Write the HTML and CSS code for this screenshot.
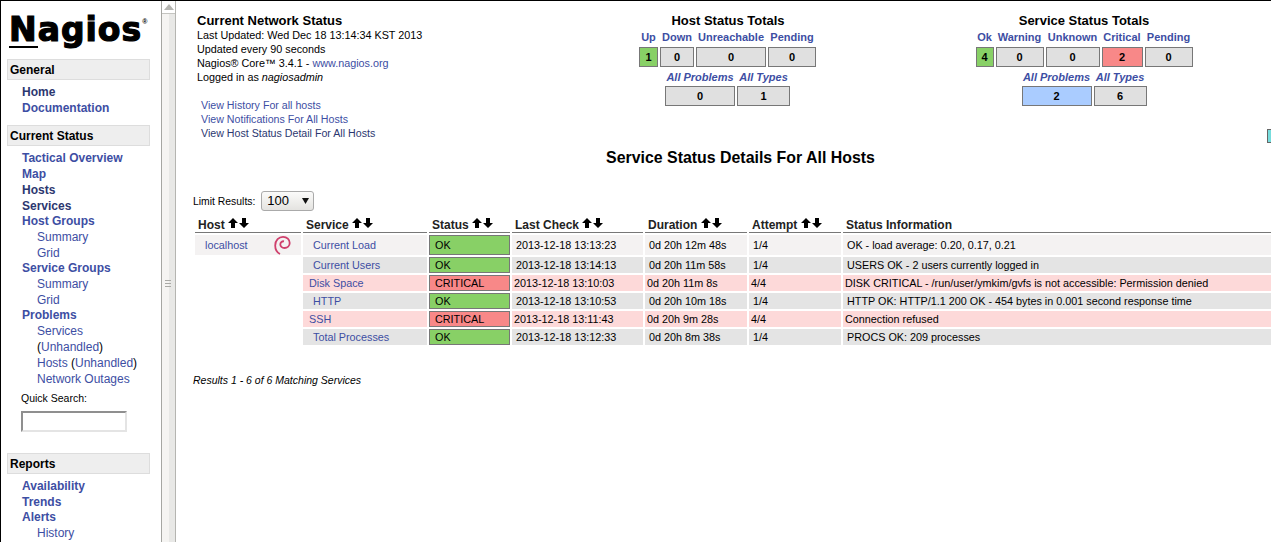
FILE: index.html
```html
<!DOCTYPE html>
<html lang="en">
<head>
  <meta charset="UTF-8" />
  <title>Nagios Core</title>
  <link rel="stylesheet" href="styles.css">
</head>
<body>

  <div class="frames">
    <nav class="side">
      <div class="logo"><span class="logo-n">N</span>agios<sup>®</sup></div>

      <div class="side-head">General</div>
      <div class="side-group">
        <a class="nav1 seen" href="#">Home</a>
        <a class="nav1" href="#">Documentation</a>
      </div>

      <div class="side-head">Current Status</div>
      <div class="side-group no-gap">
        <a class="nav1" href="#">Tactical Overview</a>
        <a class="nav1" href="#">Map</a>
        <a class="nav1 seen" href="#">Hosts</a>
        <a class="nav1 seen" href="#">Services</a>
        <a class="nav1 tight" href="#">Host Groups</a>
        <a class="nav2" href="#">Summary</a>
        <a class="nav2" href="#">Grid</a>
        <a class="nav1 tight" href="#">Service Groups</a>
        <a class="nav2" href="#">Summary</a>
        <a class="nav2" href="#">Grid</a>
        <a class="nav1 tight" href="#">Problems</a>
        <a class="nav2" href="#">Services</a>
        <div class="nav2">(<a href="#">Unhandled</a>)</div>
        <div class="nav2"><a href="#">Hosts</a> (<a href="#">Unhandled</a>)</div>
        <a class="nav2" href="#">Network Outages</a>
      </div>

      <div class="quick">
        <label for="q">Quick Search:</label>
        <input type="text" id="q" />
      </div>

      <div class="side-head">Reports</div>
      <div class="side-group">
        <a class="nav1" href="#">Availability</a>
        <a class="nav1" href="#">Trends</a>
        <a class="nav1 tight" href="#">Alerts</a>
        <a class="nav2" href="#">History</a>
      </div>
    </nav>

    <div class="splitter">
      <div class="split-up"><svg width="10" height="6" viewBox="0 0 10 6"><path d="M5 0 10 6H0z" fill="#b5b5b1"/></svg></div>
      <div class="split-grip"><i></i><i></i><i></i></div>
    </div>

    <main class="main">
      <div class="top">
        <div class="info">
          <div class="info-title">Current Network Status</div>
          <div>Last Updated: Wed Dec 18 13:14:34 KST 2013</div>
          <div>Updated every 90 seconds</div>
          <div>Nagios® Core™ 3.4.1 - <a href="#">www.nagios.org</a></div>
          <div>Logged in as <em>nagiosadmin</em></div>
          <div class="info-links">
            <a href="#">View History For all hosts</a>
            <a href="#">View Notifications For All Hosts</a>
            <a class="seen" href="#">View Host Status Detail For All Hosts</a>
          </div>
        </div>

        <div class="totals totals-host">
          <div class="totals-title">Host Status Totals</div>
          <table class="tot">
            <tr><th>Up</th><th>Down</th><th>Unreachable</th><th>Pending</th></tr>
            <tr><td class="green w-up">1</td><td class="w-down">0</td><td class="w-unreach">0</td><td class="w-pend">0</td></tr>
          </table>
          <table class="tot sub">
            <tr><th>All Problems</th><th>All Types</th></tr>
            <tr><td class="w-prob">0</td><td class="w-types">1</td></tr>
          </table>
        </div>

        <div class="totals totals-serv">
          <div class="totals-title">Service Status Totals</div>
          <table class="tot">
            <tr><th>Ok</th><th>Warning</th><th>Unknown</th><th>Critical</th><th>Pending</th></tr>
            <tr><td class="green w-ok">4</td><td class="w-warn">0</td><td class="w-unk">0</td><td class="red w-crit">2</td><td class="w-pend">0</td></tr>
          </table>
          <table class="tot sub">
            <tr><th>All Problems</th><th>All Types</th></tr>
            <tr><td class="blue w-prob">2</td><td class="w-types">6</td></tr>
          </table>
        </div>
      </div>

      <div class="cyan-box"></div>

      <h1 class="page-title">Service Status Details For All Hosts</h1>

      <div class="limit">
        <span>Limit Results:</span>
        <div class="fake-select">100 <svg width="7" height="6" viewBox="0 0 7 6"><path d="M0 0H7L3.500 6z" fill="#111"/></svg></div>
      </div>

      <table class="status">
        <colgroup>
          <col class="c-host"><col class="c-serv"><col class="c-stat"><col class="c-check"><col class="c-dur"><col class="c-att"><col class="c-info">
        </colgroup>
        <thead>
          <tr>
            <th>Host <svg class="sort" width="21" height="11" viewBox="0 0 21 11"><path d="M5 0 10 5H7V10H3V5H0z"/><path d="M14 0H18V5H21L16 10 11 5H14z"/></svg></th>
            <th>Service <svg class="sort" width="21" height="11" viewBox="0 0 21 11"><path d="M5 0 10 5H7V10H3V5H0z"/><path d="M14 0H18V5H21L16 10 11 5H14z"/></svg></th>
            <th>Status <svg class="sort" width="21" height="11" viewBox="0 0 21 11"><path d="M5 0 10 5H7V10H3V5H0z"/><path d="M14 0H18V5H21L16 10 11 5H14z"/></svg></th>
            <th>Last Check <svg class="sort" width="21" height="11" viewBox="0 0 21 11"><path d="M5 0 10 5H7V10H3V5H0z"/><path d="M14 0H18V5H21L16 10 11 5H14z"/></svg></th>
            <th>Duration <svg class="sort" width="21" height="11" viewBox="0 0 21 11"><path d="M5 0 10 5H7V10H3V5H0z"/><path d="M14 0H18V5H21L16 10 11 5H14z"/></svg></th>
            <th>Attempt <svg class="sort" width="21" height="11" viewBox="0 0 21 11"><path d="M5 0 10 5H7V10H3V5H0z"/><path d="M14 0H18V5H21L16 10 11 5H14z"/></svg></th>
            <th>Status Information</th>
          </tr>
        </thead>
        <tbody>
          <tr class="odd first">
            <td class="host">
              <div class="host-in"><a href="#">localhost</a>
                <svg width="17" height="20" viewBox="0 0 17 20"><path d="M6 19C3 17.500 1.200 14 1.200 10.500 1.200 5 5 1.800 9 1.800 13 1.800 15.700 4.500 15.700 8 15.700 11 13.300 13 10.500 13 8 13 6.200 11.300 6.300 9.200 6.400 7.300 8 6 10 6.300" fill="none" stroke="#cf3f6c" stroke-width="1.800"/></svg>
              </div>
            </td>
            <td class="serv"><a href="#">Current Load</a></td>
            <td class="ok">OK</td>
            <td>2013-12-18 13:13:23</td>
            <td>0d 20h 12m 48s</td>
            <td>1/4</td>
            <td>OK - load average: 0.20, 0.17, 0.21</td>
          </tr>
          <tr class="even">
            <td class="empty"></td>
            <td class="serv"><a href="#">Current Users</a></td>
            <td class="ok">OK</td>
            <td>2013-12-18 13:14:13</td>
            <td>0d 20h 11m 58s</td>
            <td>1/4</td>
            <td>USERS OK - 2 users currently logged in</td>
          </tr>
          <tr class="crit">
            <td class="empty"></td>
            <td class="serv"><a href="#">Disk Space</a></td>
            <td class="bad">CRITICAL</td>
            <td>2013-12-18 13:10:03</td>
            <td>0d 20h 11m 8s</td>
            <td>4/4</td>
            <td>DISK CRITICAL - /run/user/ymkim/gvfs is not accessible: Permission denied</td>
          </tr>
          <tr class="even">
            <td class="empty"></td>
            <td class="serv"><a href="#">HTTP</a></td>
            <td class="ok">OK</td>
            <td>2013-12-18 13:10:53</td>
            <td>0d 20h 10m 18s</td>
            <td>1/4</td>
            <td>HTTP OK: HTTP/1.1 200 OK - 454 bytes in 0.001 second response time</td>
          </tr>
          <tr class="crit">
            <td class="empty"></td>
            <td class="serv"><a href="#">SSH</a></td>
            <td class="bad">CRITICAL</td>
            <td>2013-12-18 13:11:43</td>
            <td>0d 20h 9m 28s</td>
            <td>4/4</td>
            <td>Connection refused</td>
          </tr>
          <tr class="even">
            <td class="empty"></td>
            <td class="serv"><a href="#">Total Processes</a></td>
            <td class="ok">OK</td>
            <td>2013-12-18 13:12:33</td>
            <td>0d 20h 8m 38s</td>
            <td>1/4</td>
            <td>PROCS OK: 209 processes</td>
          </tr>
        </tbody>
      </table>

      <div class="results">Results 1 - 6 of 6 Matching Services</div>
    </main>
  </div>

</body>
</html>
```
FILE: styles.css
```css
html, body {
  margin: 0;
  height: 100%;
  overflow: hidden;
}
body {
  font-family: "Liberation Sans", Arial, sans-serif;
  font-size: 10.800px;
  color: #000;
  background: #fff;
}
a {
  color: #3d4ea3;
  text-decoration: none;
}
a.seen {
  color: #2c3770;
}
.frames {
  display: flex;
  height: 542px;
  border-top: 1px solid #000;
  border-left: 1px solid #000;
  box-sizing: border-box;
}

/* left menu */
.side {
  width: 160px;
  flex: none;
  overflow: hidden;
  padding-left: 6px;
  box-sizing: border-box;
}
.logo {
  height: 58px;
  padding: 5px 0 0 2px;
  box-sizing: border-box;
  font-family: "DejaVu Sans", sans-serif;
  font-size: 33px;
  font-weight: bold;
  letter-spacing: 1px;
  line-height: 48px;
  color: #000;
  white-space: nowrap;
  -webkit-text-stroke: 1.200px #000;
}
.logo-n {
  display: inline-block;
  line-height: 33px;
  border-bottom: 2px solid #000;
}
.logo sup {
  font-family: "Liberation Sans", sans-serif;
  font-size: 7px;
  line-height: 0;
  vertical-align: 17px;
  letter-spacing: 0;
  -webkit-text-stroke: 0;
}
.side-head {
  width: 143px;
  height: 21px;
  box-sizing: border-box;
  border: 1px solid #ddd;
  background: #eee;
  font-size: 12px;
  font-weight: bold;
  line-height: 20px;
  padding-left: 2px;
}
.side-group {
  padding: 4px 0 0 15px;
  margin-bottom: 9px;
}
.side-group.no-gap {
  margin-bottom: 0;
}
.nav1, .nav2 {
  display: block;
  font-size: 12px;
  line-height: 16px;
  height: 16px;
}
.nav1 {
  font-weight: bold;
}
.nav1.tight {
  height: 15px;
  line-height: 15px;
}
.nav2 {
  padding-left: 15px;
}
.quick {
  padding: 3px 0 0 14px;
  margin-bottom: 21px;
}
.quick label {
  display: block;
  font-size: 10.500px;
  line-height: 16px;
  margin-bottom: 5px;
}
.quick input {
  display: block;
  width: 106px;
  height: 21px;
  box-sizing: border-box;
  padding: 0;
  border: 2px solid;
  border-color: #8f8f8f #e4e4e4 #e4e4e4 #8f8f8f;
  background: #fff;
}

/* frame divider */
.splitter {
  width: 15px;
  flex: none;
  box-sizing: border-box;
  border-left: 1px solid #a6a6a2;
  border-right: 1px solid #b5b5b1;
  background: linear-gradient(to right, #f5f4f2 7px, #e8e8e6 7px);
  position: relative;
}
.split-up {
  height: 12px;
  border-bottom: 1px solid #c4c4c0;
  background: #fff;
  display: flex;
  align-items: center;
  justify-content: center;
}
.split-grip {
  position: absolute;
  top: 279px;
  left: 3px;
  width: 6px;
}
.split-grip i {
  display: block;
  height: 1px;
  margin-bottom: 2px;
  background: #a9a9a5;
}

/* main area */
.main {
  flex: 1;
  min-width: 0;
  overflow: hidden;
  position: relative;
  padding: 13px 0 0 17px;
}
.top {
  display: flex;
  height: 135px;
}
.info {
  width: 431px;
  flex: none;
  padding-left: 4px;
  line-height: 14px;
}
.info-title {
  font-size: 13px;
  font-weight: bold;
  line-height: 14px;
}
.info-links {
  margin: 14px 0 0 4px;
  font-size: 10.650px;
}
.info-links a {
  display: block;
}
.totals {
  flex: none;
  text-align: center;
}
.totals-host {
  width: 200px;
}
.totals-serv {
  width: 240px;
  margin-left: 136px;
}
.totals-title {
  font-size: 13px;
  font-weight: bold;
  line-height: 14px;
}
.tot {
  border-collapse: separate;
  border-spacing: 2px;
  margin: 0 auto;
}
.totals-host .tot {
  margin-left: 9px;
}
.totals-host .tot.sub {
  margin-left: 35px;
}
.tot th {
  padding: 0;
  font-size: 11px;
  line-height: 15px;
  font-weight: bold;
  color: #3d4ea3;
}
.tot td {
  height: 20px;
  box-sizing: border-box;
  padding: 0;
  border: 1px solid #777;
  background: #e0e0e0;
  font-size: 11px;
  font-weight: bold;
  text-align: center;
}
.tot.sub th {
  font-style: italic;
  line-height: 13px;
}
.tot td.green { background: #88d066; }
.tot td.red { background: #f88888; }
.tot td.blue { background: #aaccff; }
.w-up { width: 19px; }
.w-ok { width: 18px; }
.w-down { width: 34px; }
.w-unreach { width: 70px; }
.w-pend { width: 48px; }
.w-warn { width: 48px; }
.w-unk { width: 54px; }
.w-crit { width: 41px; }
.w-prob { width: 70px; }
.w-types { width: 53px; }

.cyan-box {
  position: absolute;
  top: 128px;
  right: -6px;
  width: 10px;
  height: 14px;
  box-sizing: border-box;
  border: 1px solid #666;
  background: #77dddd;
}
.page-title {
  margin: 0;
  font-size: 15.900px;
  line-height: 18px;
  font-weight: bold;
  text-align: center;
  width: 1095px;
}
.limit {
  display: flex;
  align-items: center;
  gap: 6px;
  margin-top: 24px;
  font-size: 10.400px;
}
.fake-select {
  width: 53px;
  height: 20px;
  box-sizing: border-box;
  border: 1px solid #aaa;
  border-radius: 3px;
  background: linear-gradient(#fbfbfa, #e4e3e0);
  font-size: 13px;
  line-height: 18px;
  padding-left: 5px;
  display: flex;
  align-items: center;
  gap: 13px;
}

/* service table */
.status {
  table-layout: fixed;
  width: 1260px;
  border-collapse: separate;
  border-spacing: 2px;
  margin-top: 2px;
}
.c-host { width: 106px; }
.c-serv { width: 124px; }
.c-stat { width: 81px; }
.c-check { width: 131px; }
.c-dur { width: 102px; }
.c-att { width: 92px; }
.status th {
  height: 17px;
  padding: 0 0 0 3px;
  border-bottom: 1px solid #777;
  font-size: 12px;
  font-weight: bold;
  line-height: 14px;
  text-align: left;
  color: #222;
  white-space: nowrap;
  vertical-align: bottom;
}
.sort {
  vertical-align: 0;
}
.status td {
  height: 16px;
  padding: 0 0 0 4px;
  line-height: 14px;
  white-space: nowrap;
  overflow: hidden;
}
.odd td { background: #f4f2f2; height: 20px; }
.even td { background: #e4e4e4; }
.crit td { background: #fdd9d9; padding-left: 2px; }
.status td.empty { background: none; }
.status td.serv { padding-left: 10px; }
.crit td.serv { padding-left: 6px; }
.status td.ok, .status td.bad {
  padding-left: 5px;
  border: 1px solid #777;
  box-sizing: border-box;
}
.status td.ok { background: #88d066; }
.status td.bad { background: #f88888; }
.status td.host {
  background: #f4f2f2;
  padding: 0 0 0 10px;
}
.host-in {
  display: flex;
  align-items: center;
  justify-content: space-between;
  padding-right: 10px;
}
.results {
  margin-top: 27px;
  font-size: 10.500px;
  font-style: italic;
}
```
